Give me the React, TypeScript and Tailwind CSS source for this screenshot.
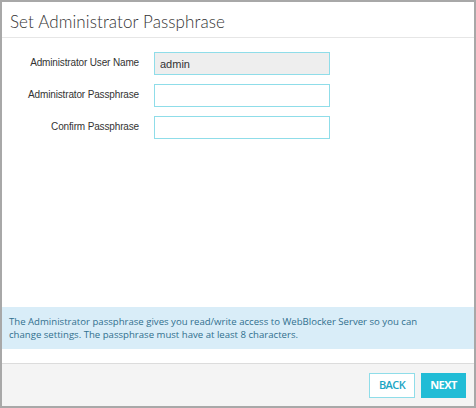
export default function App() {
  const fields = [
    { label: "Administrator User Name", value: "admin", disabled: true },
    { label: "Administrator Passphrase", value: "", disabled: false },
    { label: "Confirm Passphrase", value: "", disabled: false },
  ];
  return (
    <div className="w-[476px] h-[408px] bg-white">
      <div className="w-full h-full border-2 border-[#a8a8a8] flex flex-col">
        <div className="h-[36px] border-b border-[#e6e6e6] pl-[8px] flex items-center">
          <h1 className="text-[17px] font-light text-[#333] tracking-[0.1px] font-['Lato',sans-serif] leading-none pt-[3px]">
            Set Administrator Passphrase
          </h1>
        </div>
        <div className="flex-1 flex flex-col">
          <div className="pt-[14px] flex flex-col gap-[9px]">
            {fields.map((f) => (
              <div key={f.label} className="flex items-center">
                <label className="w-[137px] text-right text-[10px] text-[#333] font-['Liberation_Sans',Arial,sans-serif] tracking-[-0.15px] pb-[2px]">
                  {f.label}
                </label>
                <input
                  readOnly
                  value={f.value}
                  className={`ml-[15px] w-[176px] h-[23px] px-[5px] text-[11px] text-[#333] font-['Liberation_Sans',Arial,sans-serif] border border-[#8fdde9] outline-none ${
                    f.disabled ? "bg-[#eeeeee]" : "bg-white"
                  }`}
                />
              </div>
            ))}
          </div>
          <div className="flex-1" />
          <div className="bg-[#d9edf8] px-[7px] py-[8px] mb-[14px] text-[9.6px] leading-[13px] text-[#31708f] font-['Open_Sans',sans-serif]">
            The Administrator passphrase gives you read/write access to WebBlocker Server so you can
            <br />
            change settings. The passphrase must have at least 8 characters.
          </div>
        </div>
        <div className="h-[43px] border-t border-[#dcdcdc] bg-[#f4f4f4] flex items-center justify-end gap-[6px] pr-[8px]">
          <button className="w-[46px] h-[25px] border border-[#8fdde9] bg-white text-[#1aa5c4] text-[11px] font-semibold font-['Open_Sans',sans-serif] tracking-[-0.6px]">
            BACK
          </button>
          <button className="w-[45px] h-[25px] bg-[#21bcd6] text-white text-[11px] font-bold font-['Open_Sans',sans-serif] tracking-[-0.6px]">
            NEXT
          </button>
        </div>
      </div>
    </div>
  );
}
